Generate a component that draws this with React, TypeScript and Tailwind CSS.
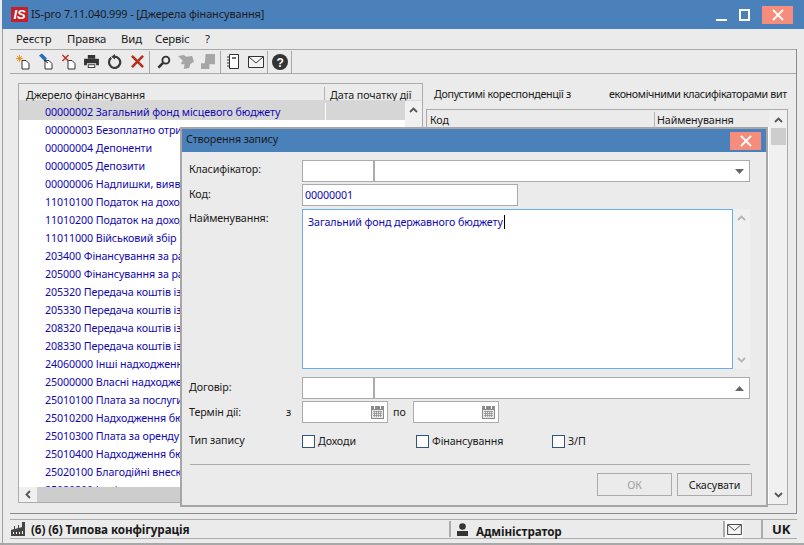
import React from 'react';

const rows = [
  '00000002 Загальний фонд місцевого бюджету',
  '00000003 Безоплатно отримані',
  '00000004 Депоненти',
  '00000005 Депозити',
  '00000006 Надлишки, виявлені',
  '11010100 Податок на доходи',
  '11010200 Податок на доходи',
  '11011000 Військовий збір',
  '203400 Фінансування за рахунок',
  '205000 Фінансування за рахунок',
  '205320 Передача коштів із',
  '205330 Передача коштів із',
  '208320 Передача коштів із',
  '208330 Передача коштів із',
  '24060000 Інші надходження',
  '25000000 Власні надходження',
  '25010100 Плата за послуги',
  '25010200 Надходження бюджетних',
  '25010300 Плата за оренду',
  '25010400 Надходження бюджетних',
  '25020100 Благодійні внески',
  '25020200 Інші',
];

const Sep = ({ className }: { className: string }) => <div className={`h-[22px] w-px bg-[#a8a8a8] ${className}`} />;

const Tool = ({ children }: { children: React.ReactNode }) => (
  <div className="flex h-[20px] w-[23px] items-center justify-center">{children}</div>
);

const DocIcon = ({ children }: { children: React.ReactNode }) => (
  <svg width="18" height="18" viewBox="0 0 18 18" fill="none">
    <path d="M8 7.500H12l3 3v5.500H8z" fill="#fff" stroke="#333" />
    {children}
  </svg>
);

const MailIcon = ({ w, h }: { w: number; h: number }) => (
  <svg width={w} height={h} viewBox="0 0 16 12" fill="none">
    <path d="M.5.5h15v11H.5z" fill="#f4f4f4" stroke="#333" />
    <path d="M1 1l7 6 7-6" stroke="#333" />
  </svg>
);

const Toolbar = () => (
  <div className="flex h-[25px] items-center border-y border-[#a8a8a8] pl-[1px]">
    <Tool>
      <DocIcon>
        <path d="M5.500 2v7M2 5.500h7M3 3l5 5M8 3L3 8" stroke="#e8942a" />
      </DocIcon>
    </Tool>
    <Tool>
      <DocIcon>
        <path d="M2 2.500l3-2 5 5-2.500 2.500z" fill="#1f6fc0" />
        <path d="M7 7l4 3" stroke="#222" />
      </DocIcon>
    </Tool>
    <Tool>
      <DocIcon>
        <path d="M2.500 2l6 6M8.500 2l-6 6" stroke="#b8322a" strokeWidth="1.500" />
      </DocIcon>
    </Tool>
    <Tool>
      <svg width="15" height="13" viewBox="0 0 16 14">
        <path d="M4 0h8v4H4z" fill="#333" />
        <path d="M0 4h16v7h-3V9H3v2H0z" fill="#333" />
        <path d="M4 10h8v4H4z" fill="#333" />
        <path d="M5 11h6v2H5z" fill="#fff" />
      </svg>
    </Tool>
    <Tool>
      <svg width="15" height="15" viewBox="0 0 16 16" fill="none">
        <path d="M4.500 4a6 6 0 1 0 3.500-1.200" stroke="#3a3a3a" strokeWidth="2.400" />
        <path d="M8.500 0l-4 3 4 2.800z" fill="#3a3a3a" />
      </svg>
    </Tool>
    <Tool>
      <svg width="13" height="13" viewBox="0 0 14 14">
        <path d="M1 1l12 12M13 1L1 13" stroke="#b5301f" strokeWidth="2.800" />
      </svg>
    </Tool>
    <Sep className="mr-[2px]" />
    <div className="flex -space-x-[1px]">
      <Tool>
        <svg width="14" height="14" viewBox="0 0 15 15" fill="none">
          <circle cx="9.500" cy="5.500" r="3.700" stroke="#333" strokeWidth="2" />
          <path d="M6.500 8.500L1.500 13.500" stroke="#333" strokeWidth="2.800" />
        </svg>
      </Tool>
      <Tool>
        <svg width="16" height="16" viewBox="0 0 17 17">
          <path d="M0 2l6-1 3 2 6-1 2 6-4 3-1 4-6 1 1-5-4 0 2-4z" fill="#a6a6a6" />
        </svg>
      </Tool>
      <Tool>
        <svg width="14" height="15" viewBox="0 0 15 16">
          <path d="M5 0h10v11H9v5H0v-6h4z" fill="#a6a6a6" />
        </svg>
      </Tool>
    </div>
    <Sep className="ml-[1px]" />
    <Tool>
      <svg width="12" height="15" viewBox="0 0 12 15" fill="none">
        <path d="M2.500 .5h9v14h-9z" fill="#fff" stroke="#333" />
        <path d="M5 4h4" stroke="#333" strokeWidth="1.400" />
        <path d="M0 3h3M0 6h3M0 9h3M0 12h3" stroke="#333" />
      </svg>
    </Tool>
    <Tool>
      <MailIcon w={16} h={12} />
    </Tool>
    <Sep className="" />
    <Tool>
      <svg width="16" height="16" viewBox="0 0 16 16">
        <circle cx="8" cy="8" r="8" fill="#333" />
        <text x="8" y="12.500" textAnchor="middle" fontSize="12" fontWeight="700" fill="#fff" fontFamily="Liberation Sans">?</text>
      </svg>
    </Tool>
    <Sep className="" />
  </div>
);

const Calendar = () => (
  <svg width="13" height="13" viewBox="0 0 13 13" className="ml-auto mr-[3px]">
    <rect width="13" height="13" fill="#8a8a8a" />
    <rect x="1" y="4" width="11" height="8" fill="#e8e8e8" />
    <path d="M3 0h1v3H3zM9 0h1v3H9z" fill="#fff" />
    <path d="M2 5.500h9M2 7.500h9M2 9.500h9M3.500 5v6M5.500 5v6M7.500 5v6M9.500 5v6" stroke="#8a8a8a" strokeWidth=".7" />
  </svg>
);

const Chevron = ({ up, color = '#555' }: { up?: boolean; color?: string }) => (
  <svg width="9" height="6" viewBox="0 0 9 6" fill="none">
    <path d={up ? 'M1 5l3.500-3.500L8 5' : 'M1 1l3.500 3.500L8 1'} stroke={color} strokeWidth="1.800" />
  </svg>
);

const Input = ({ className, children }: { className: string; children?: React.ReactNode }) => (
  <div className={`flex h-[22px] items-center border border-[#ababab] bg-white ${className}`}>{children}</div>
);

const Check = ({ label, className }: { label: string; className: string }) => (
  <div className={`flex items-center ${className}`}>
    <div className="h-[13px] w-[13px] border border-[#2f5580] bg-white" />
    <span className="ml-[3px]">{label}</span>
  </div>
);

const Dialog = () => (
  <div className="absolute left-[180px] top-[127px] h-[380px] w-[588px] border-2 border-[#a6a6a6] bg-[#ebebeb]">
    <div className="flex h-[23px] items-center justify-between bg-[#4a81ba] pl-[4px] pr-[5px]">
      <span className="pb-[3px]">Створення запису</span>
      <div className="flex h-[18px] w-[31px] items-center justify-center bg-[#f68d7c]">
        <svg width="12" height="12" viewBox="0 0 12 12">
          <path d="M1 1l10 10M11 1L1 11" stroke="#fff" strokeWidth="1.800" />
        </svg>
      </div>
    </div>
    <div className="pl-[7px] pt-[8px]">
      <div className="flex">
        <span className="w-[113px] pt-[1px]">Класифікатор:</span>
        <Input className="w-[72px]" />
        <Input className="w-[376px] justify-end pr-[5px]">
          <svg width="9" height="5" viewBox="0 0 9 5"><path d="M0 0h9L4.500 5z" fill="#666" /></svg>
        </Input>
      </div>
      <div className="mt-[2px] flex">
        <span className="w-[113px] pt-[2px]">Код:</span>
        <Input className="w-[216px] pl-[2px] text-[#1208b0]">00000001</Input>
      </div>
      <div className="mt-[3px] flex">
        <span className="w-[113px] pt-[1px]">Найменування:</span>
        <div className="flex">
          <div className="h-[160px] w-[431px] border border-[#6aaeea] bg-white pl-[5px] pt-[4px] text-[#1208b0]">
            Загальний фонд державного бюджету
            <span className="ml-px inline-block h-[14px] w-px bg-black align-[-3px]" />
          </div>
          <div className="flex w-[17px] flex-col items-center justify-between bg-[#f0f0f0] py-[6px]">
            <Chevron up color="#b5b5b5" />
            <Chevron color="#b5b5b5" />
          </div>
        </div>
      </div>
      <div className="mt-[8px] flex">
        <span className="w-[113px] pt-[2px]">Договір:</span>
        <Input className="w-[72px]" />
        <Input className="w-[376px] justify-end pr-[5px]">
          <svg width="9" height="5" viewBox="0 0 9 5"><path d="M4.500 0L9 5H0z" fill="#666" /></svg>
        </Input>
      </div>
      <div className="mt-[2px] flex items-center">
        <span className="-mt-[1px] w-[97px]">Термін дії:</span>
        <span className="w-[16px]">з</span>
        <Input className="w-[86px]"><Calendar /></Input>
        <span className="w-[25px] pl-[5px]">по</span>
        <Input className="w-[86px]"><Calendar /></Input>
      </div>
      <div className="mt-[10px] flex items-center">
        <span className="-mt-[2px] w-[113px]">Тип запису</span>
        <Check label="Доходи" className="w-[114px]" />
        <Check label="Фінансування" className="w-[136px]" />
        <Check label="З/П" className="" />
      </div>
      <div className="ml-[1px] mt-[15px] h-px w-[560px] bg-[#ababab]" />
      <div className="ml-[408px] mt-[8px] flex gap-[5px]">
        <div className="flex h-[23px] w-[75px] items-center justify-center border border-[#ababab] text-[#a0a0a0]">ОК</div>
        <div className="flex h-[23px] w-[75px] items-center justify-center border border-[#ababab]">Скасувати</div>
      </div>
    </div>
  </div>
);

const LeftTable = () => (
  <div className="flex h-[420px] w-[405px] flex-col border border-[#ababab] bg-white">
    <div className="flex h-[17px] border-b border-[#d8d8d8] bg-[#ebebeb] pt-[3px]">
      <span className="w-[306px] border-r border-[#b5b5b5] pl-[7px]">Джерело фінансування</span>
      <span className="whitespace-nowrap pl-[5px]">Дата початку дії</span>
    </div>
    <div className="flex min-h-0 flex-1">
      <div className="min-w-0 flex-1 overflow-hidden">
        {rows.map((r, i) => (
          <div
            key={r}
            className={`flex items-center whitespace-nowrap pl-[26px] text-[#1208b0] ${
              i === 0 ? 'h-[19px] bg-[#d6d6d6] pt-[2px]' : 'h-[18px] pt-[1px]'
            }`}
          >
            {i === 0 ? (
              <>
                <span className="w-[280px] shrink-0">{r}</span>
                <span className="h-full w-px bg-white" />
              </>
            ) : (
              <span className="w-[136px] overflow-hidden">{r}</span>
            )}
          </div>
        ))}
      </div>
      <div className="flex w-[17px] justify-center bg-[#f0f0f0] pt-[6px]">
        <Chevron up />
      </div>
    </div>
    <div className="flex h-[15px] items-center bg-[#f0f0f0]">
      <div className="flex w-[18px] justify-center">
        <svg width="6" height="9" viewBox="0 0 6 9" fill="none"><path d="M5 1L1.500 4.500 5 8" stroke="#555" strokeWidth="1.800" /></svg>
      </div>
      <div className="h-full flex-1 bg-[#cdcdcd]" />
    </div>
  </div>
);

const RightPanel = () => (
  <div className="ml-[3px] flex w-[362px] flex-col">
    <div className="flex h-[26px] items-center whitespace-nowrap pb-[4px] tracking-[-0.28px]">
      <span className="ml-[8px] w-[175px] shrink-0">Допустимі кореспонденції з</span>
      <span className="shrink-0 tracking-[-0.36px]">економічними класифікаторами вит</span>
    </div>
    <div className="flex h-[396px] border border-[#ababab] bg-white">
      <div className="flex-1">
        <div className="flex h-[17px] bg-[#ebebeb] pt-[2px]">
          <span className="w-[228px] border-r border-[#b5b5b5] pl-[3px]">Код</span>
          <span className="pl-[2px]">Найменування</span>
        </div>
      </div>
      <div className="flex w-[18px] flex-col items-center bg-[#f0f0f0] pt-[7px]">
        <Chevron up />
        <div className="mt-[5px] h-[17px] w-[15px] bg-[#cdcdcd]" />
        <div className="mt-auto pb-[6px]">
          <Chevron />
        </div>
      </div>
    </div>
  </div>
);

export default function App() {
  return (
    <div className="relative flex h-[545px] w-[804px] flex-col overflow-hidden bg-[#ebebeb] font-['Noto_Sans',sans-serif] text-[10.7px] leading-[16px] tracking-[-0.1px] text-[#1a1a1a]">
      <div className="ml-[2px] flex h-[29px] shrink-0 items-center bg-[#4a81ba] pl-[9px] pr-[11px]">
        <div className="flex h-[15px] w-[17px] items-center justify-center bg-[#c4202a] font-['Liberation_Sans',sans-serif] text-[13px] font-bold italic text-white">
          IS
        </div>
        <span className="ml-[3px] pb-[1px] text-[10.9px]">IS-pro 7.11.040.999 - [Джерела фінансування]</span>
        <div className="ml-auto mt-[10px] h-[2px] w-[11px] bg-white" />
        <div className="ml-[12px] h-[12px] w-[11px] border-2 border-white" />
        <div className="ml-[12px] flex h-[18px] w-[31px] items-center justify-center bg-[#f68d7c]">
          <svg width="12" height="12" viewBox="0 0 12 12">
            <path d="M1 1l10 10M11 1L1 11" stroke="#fff" strokeWidth="1.800" />
          </svg>
        </div>
      </div>
      <div className="flex h-[20px] shrink-0 items-center pl-[16px] text-[11.3px]">
        <span className="w-[51px]">Реєстр</span>
        <span className="w-[54px]">Правка</span>
        <span className="w-[34px]">Вид</span>
        <span className="w-[50px]">Сервіс</span>
        <span>?</span>
      </div>
      <div className="ml-[10px] mr-[7px] flex h-[465px] shrink-0 flex-col border-b border-r border-[#8a8a8a]">
        <Toolbar />
        <div className="ml-[8px] mt-[9px] flex">
          <LeftTable />
          <RightPanel />
        </div>
      </div>
      <div className="ml-[10px] mr-[7px] mt-[5px] flex h-[20px] shrink-0 items-center border-y border-[#ababab] text-[11.7px] font-bold">
        <div className="flex w-[441px] items-center border-r-2 border-[#ababab] pl-[1px]">
          <svg width="16" height="14" viewBox="0 0 16 14">
            <path d="M0 14V8l3-1v-3h1v3l3-1V3h1v3l3-1V0h3v14z" fill="#444" />
            <path d="M2 10h1v2H2zM5 10h1v2H5zM8 10h1v2H8zM11 9h1v3h-1z" fill="#fff" />
          </svg>
          <span className="ml-[4px]">(6) (6) Типова конфігурація</span>
        </div>
        <div className="flex w-[274px] items-center border-r-2 border-[#ababab] pl-[6px]">
          <svg width="11" height="13" viewBox="0 0 11 13">
            <circle cx="5.500" cy="3.500" r="3.300" fill="#333" />
            <path d="M0 8h11v5H0z" fill="#333" />
          </svg>
          <span className="ml-[8px] translate-y-[2px]">Адміністратор</span>
        </div>
        <div className="flex w-[38px] items-center border-r-2 border-[#ababab]">
          <div className="flex h-[18px] w-[18px] items-center justify-center bg-[#f8f8f8]">
            <MailIcon w={15} h={11} />
          </div>
        </div>
        <span className="ml-[9px] text-[13px]">UK</span>
      </div>
      <div className="absolute bottom-0 left-0 right-0 h-[2px] bg-[#a8a8a8]" />
      <div className="absolute bottom-0 left-[2px] top-[29px] w-px bg-[#a0a0a0]" />
      <Dialog />
    </div>
  );
}
